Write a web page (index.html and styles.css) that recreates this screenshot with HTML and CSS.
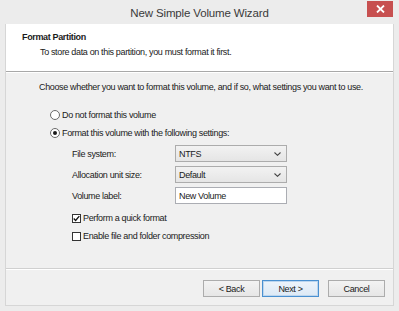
FILE: index.html
```html
<!DOCTYPE html>
<html lang="en">
<head>
<meta charset="utf-8">
<title>New Simple Volume Wizard</title>
<link rel="stylesheet" href="styles.css">
</head>
<body>
<div class="window">
  <div class="titlebar">
    <span class="spacer"></span>
    <div class="title">New Simple Volume Wizard</div>
    <button class="close" aria-label="Close">
      <svg width="9" height="8" viewBox="0 0 9 8"><path d="M1 0.5 L8 7.5 M8 0.5 L1 7.5" stroke="#fff" stroke-width="1.8" fill="none"/></svg>
    </button>
  </div>
  <div class="client">
    <div class="header">
      <div class="h-title">Format Partition</div>
      <div class="h-sub">To store data on this partition, you must format it first.</div>
    </div>
    <div class="content">
      <p class="intro">Choose whether you want to format this volume, and if so, what settings you want to use.</p>
      <div class="options">
        <label class="radio-row"><span class="radio"></span>Do not format this volume</label>
        <label class="radio-row"><span class="radio checked"></span>Format this volume with the following settings:</label>
      </div>
      <div class="settings">
        <span class="lbl">File system:</span>
        <div class="select"><span>NTFS</span><svg class="chev" width="7" height="4" viewBox="0 0 7 4"><path d="M0.5 0.5 L3.5 3.3 L6.5 0.5" stroke="#444" stroke-width="1.1" fill="none"/></svg></div>
        <span class="lbl">Allocation unit size:</span>
        <div class="select"><span>Default</span><svg class="chev" width="7" height="4" viewBox="0 0 7 4"><path d="M0.5 0.5 L3.5 3.3 L6.5 0.5" stroke="#444" stroke-width="1.1" fill="none"/></svg></div>
        <span class="lbl">Volume label:</span>
        <div class="input">New Volume</div>
      </div>
      <div class="checks">
        <label class="check-row"><span class="check checked"><svg width="8" height="7" viewBox="0 0 8 7"><path d="M0.8 3.6 L3 5.8 L7.2 0.8" stroke="#111" stroke-width="1.5" fill="none"/></svg></span>Perform a quick format</label>
        <label class="check-row"><span class="check"></span>Enable file and folder compression</label>
      </div>
    </div>
    <div class="footer">
      <button class="btn">&lt; Back</button>
      <button class="btn default">Next &gt;</button>
      <button class="btn cancel">Cancel</button>
    </div>
  </div>
</div>
</body>
</html>
```
FILE: styles.css
```css
* { box-sizing: border-box; }
html, body { margin: 0; padding: 0; }
body {
  width: 399px;
  height: 311px;
  overflow: hidden;
  background: #ececec;
  font-family: "Liberation Sans", Arial, sans-serif;
  font-size: 9px;
  letter-spacing: -0.35px;
  color: #1a1a1a;
}
.window {
  width: 399px;
  height: 311px;
  background: #ececec;
  padding: 0 5px 5px 5px;
  display: flex;
  flex-direction: column;
}
.titlebar {
  height: 24px;
  display: grid;
  grid-template-columns: 1fr auto 1fr;
  align-items: start;
  margin: 0 -5px;
}
.title {
  font-family: "Liberation Sans", Arial, sans-serif;
  font-size: 11.5px;
  letter-spacing: -0.15px;
  color: #3a3a3a;
  line-height: 14px;
  padding-top: 6px;
}
.close {
  justify-self: end;
  margin: 1px 6px 0 0;
  width: 26px;
  height: 16px;
  border: 0;
  padding: 0;
  background: #c75050;
  display: flex;
  align-items: center;
  justify-content: center;
}
.client {
  flex: 1;
  border: 1px solid #d6d6d6;
  border-top: 0;
  background: #f0f0f0;
  display: flex;
  flex-direction: column;
}
.header {
  height: 48px;
  background: #fff;
  border-bottom: 1px solid #a8a8a8;
  box-shadow: 0 1px 0 #fff;
  padding: 7px 0 0 16px;
}
.h-title {
  font-weight: bold;
  line-height: 12px;
}
.h-sub {
  margin-top: 3px;
  padding-left: 18px;
  line-height: 12px;
}
.content {
  flex: 1;
  padding: 9px 0 0 33px;
}
.intro {
  margin: 0;
  line-height: 12px;
}
.options {
  margin-top: 16px;
  padding-left: 11px;
  display: flex;
  flex-direction: column;
  gap: 6px;
}
.radio-row, .check-row {
  display: flex;
  align-items: center;
  line-height: 12px;
  height: 12px;
}
.radio {
  width: 10px;
  height: 10px;
  border-radius: 50%;
  border: 1px solid #6a6a6a;
  background: #fff;
  margin-right: 2px;
  position: relative;
}
.radio.checked::after {
  content: "";
  position: absolute;
  left: 2px;
  top: 2px;
  width: 4px;
  height: 4px;
  border-radius: 50%;
  background: #1a1a1a;
}
.settings {
  margin-top: 6px;
  padding-left: 33px;
  display: grid;
  grid-template-columns: 103px 112px;
  grid-template-rows: 17px 17px 17px;
  row-gap: 4px;
  align-items: center;
}
.lbl { line-height: 12px; }
.select {
  height: 17px;
  border: 1px solid #acacac;
  background: linear-gradient(#f2f2f2, #e5e5e5);
  display: flex;
  align-items: center;
  justify-content: space-between;
  padding: 0 5px 0 3px;
}
.input {
  height: 17px;
  border: 1px solid #abadb3;
  background: #fff;
  display: flex;
  align-items: center;
  padding-left: 3px;
}
.checks {
  margin-top: 8px;
  padding-left: 33px;
  display: flex;
  flex-direction: column;
  gap: 6px;
}
.check {
  width: 9px;
  height: 9px;
  border: 1px solid #333;
  background: #fff;
  margin-right: 2px;
  display: flex;
  align-items: center;
  justify-content: center;
}
.footer {
  height: 37px;
  border-top: 1px solid #d0d0d0;
  box-shadow: inset 0 1px 0 #fff;
  display: flex;
  align-items: flex-start;
  justify-content: flex-end;
  padding: 11px 8px 0 0;
}
.btn {
  width: 57px;
  height: 17px;
  border: 1px solid #acacac;
  background: linear-gradient(#f3f3f3, #e6e6e6);
  font-family: "Liberation Sans", Arial, sans-serif;
  font-size: 9px;
  letter-spacing: -0.35px;
  color: #1a1a1a;
  padding: 0;
  margin-left: 2px;
}
.btn.default {
  border-color: #4a90d0;
  background: linear-gradient(#edf4fb, #dde9f5);
  box-shadow: inset 0 0 0 1px #bcd6ef;
}
.btn.cancel { margin-left: 9px; }
```
